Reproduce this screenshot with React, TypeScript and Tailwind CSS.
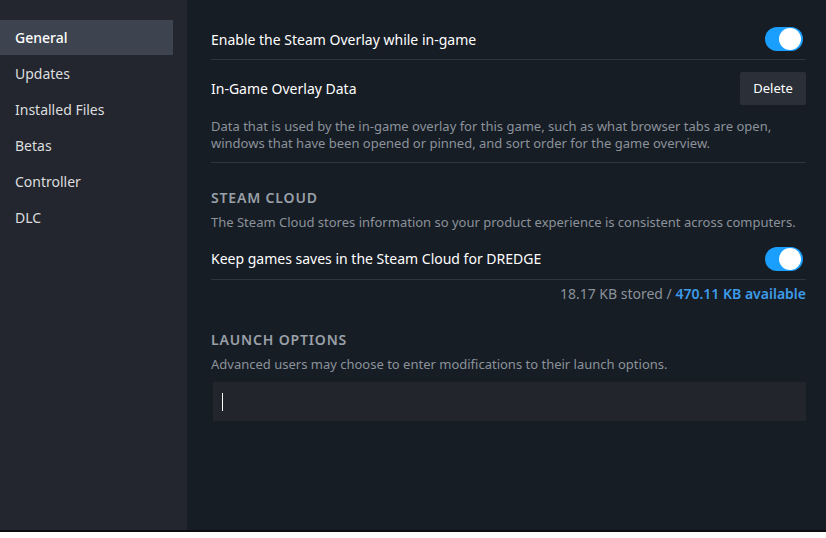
import { useState } from 'react';

const navItems = ['General', 'Updates', 'Installed Files', 'Betas', 'Controller', 'DLC'];

const Toggle = ({ on }: { on: boolean }) => (
  <div
    className={`flex h-[24px] w-[38px] items-center rounded-full px-[2px] ${
      on ? 'justify-end bg-[#1a9fff]' : 'justify-start bg-[#3d4450]'
    }`}
  >
    <div className="h-[22px] w-[22px] rounded-full bg-white" />
  </div>
);

export default function App() {
  const [active] = useState('General');

  return (
    <div
      className="h-[538px] w-full bg-white"
      style={{ fontFamily: '"Noto Sans", "Open Sans", Arial, sans-serif' }}
    >
      <div className="flex h-[532px] border-b-2 border-[#0c0e12]">
        {/* sidebar */}
        <aside className="w-[187px] shrink-0 bg-[#23262e] pt-[20px]">
          <ul className="flex flex-col gap-px">
            {navItems.map((item) => (
              <li
                key={item}
                className={`flex h-[35px] w-[173px] items-center pl-[15px] text-[14px] ${
                  item === active
                    ? 'bg-[#3d4450] font-medium text-white'
                    : 'text-[#dcdedf]'
                }`}
              >
                {item}
              </li>
            ))}
          </ul>
        </aside>

        {/* main */}
        <main className="flex-1 bg-[#171d25] pl-[24px] pr-[20px] pt-[20px]">
          <div className="flex h-[40px] items-center justify-between border-b border-[#2f3540]">
            <span className="text-[14px] text-white">Enable the Steam Overlay while in-game</span>
            <div className="mr-[3px] -mt-[1px]">
              <Toggle on />
            </div>
          </div>

          <div className="border-b border-[#2f3540] pb-[10px]">
            <div className="flex items-center justify-between pt-[12px]">
              <span className="text-[14px] text-white">In-Game Overlay Data</span>
              <button className="h-[33px] w-[66px] rounded-[2px] bg-[#2a2f38] text-[13px] text-white">
                Delete
              </button>
            </div>
            <p className="mt-[13px] text-[13px] leading-[17px] text-[#8b929a]">
              Data that is used by the in-game overlay for this game, such as what browser tabs are open,
              <br />
              windows that have been opened or pinned, and sort order for the game overview.
            </p>
          </div>

          <h2 className="mt-[24px] text-[14px] font-semibold uppercase tracking-[0.06em] text-[#9aa0a8]">
            Steam Cloud
          </h2>
          <p className="mt-[5px] text-[13px] text-[#8b929a]">
            The Steam Cloud stores information so your product experience is consistent across computers.
          </p>
          <div className="mt-[6px] flex h-[41px] items-center justify-between border-b border-[#2f3540]">
            <span className="text-[14px] text-white">Keep games saves in the Steam Cloud for DREDGE</span>
            <div className="mr-[3px]">
              <Toggle on />
            </div>
          </div>
          <p className="mt-[3px] text-right text-[14px] text-[#8b929a]">
            18.17 KB stored / <span className="font-semibold text-[#3d9be9]">470.11 KB available</span>
          </p>

          <h2 className="mt-[25px] text-[14px] font-semibold uppercase tracking-[0.06em] text-[#9aa0a8]">
            Launch Options
          </h2>
          <p className="mt-[5px] text-[13px] text-[#8b929a]">
            Advanced users may choose to enter modifications to their launch options.
          </p>
          <div className="ml-[2px] mt-[8px] flex h-[39px] items-center bg-[#23252d] pl-[9px]">
            <div className="h-[18px] w-px bg-white" />
          </div>
        </main>
      </div>
    </div>
  );
}
